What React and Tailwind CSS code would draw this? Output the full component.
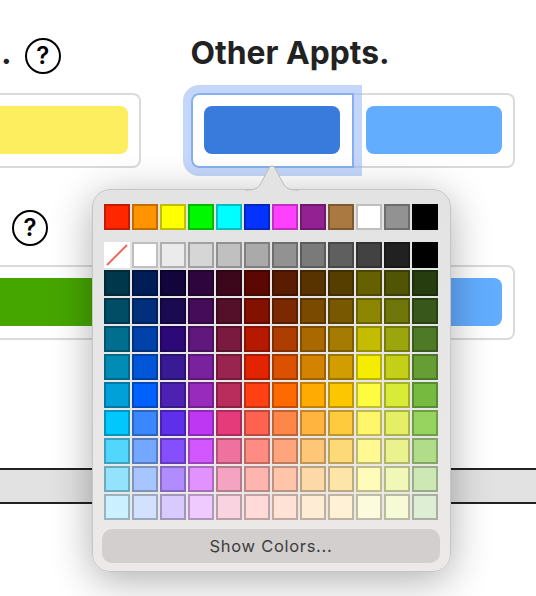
import React from "react";

const basics = ["#ff2600", "#ff9300", "#ffff00", "#00f900", "#00fdff", "#0433ff", "#ff40ff", "#942192", "#aa7942", "#ffffff", "#929292", "#000000"];

const grays = ["#ffffff", "#ebebeb", "#d6d6d6", "#c0c0c0", "#aaaaaa", "#929292", "#7a7a7a", "#5f5f5f", "#424242", "#212121", "#000000"];

const grid = [
  ["#00374a", "#011d57", "#11053b", "#2e063d", "#3c071b", "#5c0701", "#5a1c00", "#583300", "#563d00", "#666100", "#4f5504", "#263e0f"],
  ["#004d65", "#012f7b", "#1a0a52", "#450d59", "#551029", "#831100", "#7b2900", "#7a4a00", "#785800", "#8d8602", "#6f760a", "#38571a"],
  ["#006e8f", "#0042a9", "#2c0977", "#61187c", "#791a3e", "#b51a00", "#ad3e00", "#a96800", "#a67b01", "#c4bc00", "#9ba50e", "#4e7a27"],
  ["#008cb4", "#0056d6", "#371a94", "#7a219e", "#99244f", "#e22400", "#da5100", "#d38301", "#d19d01", "#f5ec00", "#c3d017", "#669d34"],
  ["#00a1d8", "#0061fe", "#4d22b2", "#982abc", "#b92d5d", "#ff4015", "#ff6a00", "#ffab01", "#fcc700", "#fefb41", "#d8ec37", "#76bb40"],
  ["#01c7fc", "#3a87fe", "#5e30eb", "#be38f3", "#e63b7a", "#fe6250", "#fe8648", "#feb43f", "#fecb3e", "#fff76b", "#e4ef65", "#96d35f"],
  ["#52d6fc", "#74a7ff", "#864ffd", "#d357fe", "#ee719e", "#ff8c82", "#fea57d", "#fec777", "#fed977", "#fff994", "#eaf28f", "#b1dd8b"],
  ["#93e3fc", "#a7c6ff", "#b18cfe", "#e292fe", "#f4a4c0", "#ffb5af", "#ffc5ab", "#fed9a8", "#fde4a8", "#fffbb9", "#f1f7b7", "#cde8b5"],
  ["#cbf0ff", "#d2e2fe", "#d8c9fe", "#efcafe", "#f9d3e0", "#ffdad8", "#ffe2d6", "#feecd4", "#fef1d5", "#fdfbdd", "#f6fad6", "#deeed4"],
];

const Swatch = ({ color }) => (
  <div className="w-[26px] h-[26px] border-2 border-black/25" style={{ backgroundColor: color }} />
);

const Help = () => (
  <span className="w-[36px] h-[36px] rounded-full border-2 border-black flex items-center justify-center text-[24px] leading-none font-semibold text-black">
    ?
  </span>
);

const Well = ({ className, color, children }) => (
  <div className={`h-[75px] border-2 bg-white flex items-center px-[11.5px] ${className}`}>
    <div className={`w-full h-[48px] rounded-lg ${color}`} />
    {children}
  </div>
);

const App = () => {
  return (
    <div className="relative w-[536px] h-[596px] overflow-hidden bg-white font-['Inter',sans-serif]">
      {/* Top row */}
      <div className="flex pt-[38px]">
        <div className="w-[190.5px] shrink-0">
          <div className="h-[54.5px] flex items-start gap-[13px]">
            <span className="text-[32px] leading-[29px] font-bold text-[#222222] pl-[1px]">.</span>
            <Help />
          </div>
          <Well className="w-[141px] rounded-r-lg border-l-0 pl-0 border-[#dadada]" color="bg-[#fcee5f] rounded-l-none" />
        </div>
        <div>
          <h2 className="h-[54.5px] text-[31.8px] leading-[29px] font-bold text-[#222222]">Other Appts.</h2>
          <div className="flex">
            <Well className="relative z-10 w-[163px] rounded-l-lg border-[#84b0ef]" color="bg-[#397bdc]">
              <div className="absolute -inset-[10px] rounded-l-[16px] border-[8px] border-[#9dbcf7]/60" />
            </Well>
            <Well className="w-[161.5px] rounded-r-lg border-l-0 pl-[12.5px] border-[#dadada]" color="bg-[#63adff]" />
          </div>
        </div>
      </div>

      {/* Second row */}
      <div className="pl-[12px] pt-[42.5px]">
        <Help />
      </div>
      <div className="flex pt-[18.5px] w-[515px]">
        <Well className="w-[353.5px] border-l-0 pl-0 border-[#dadada]" color="bg-[#46a600] rounded-l-none" />
        <Well className="flex-1 rounded-r-lg border-l-0 border-[#dadada]" color="bg-[#63adff]" />
      </div>

      {/* Band */}
      <div className="mt-[128.5px] h-[36px] border-y-2 border-[#222222] bg-[#e2e2e2]" />

      {/* Colour popover */}
      <div className="absolute z-20 left-[92px] top-[189px] w-[358.5px] h-[383px] rounded-[18px] border border-[#c6c4c4] bg-gradient-to-b from-[#e3e3e3] to-[#ede9e9] shadow-[0_8px_40px_rgba(0,0,0,0.32)]">
        <svg className="absolute left-[152px] top-[-26px]" width="54" height="27" viewBox="0 0 54 27">
          <path d="M0 26 C9 26 12 25 15 21 L24 4 Q27 0 30 4 L39 21 C42 25 45 26 54 26 L54 27 L0 27 Z" fill="#e3e3e3" />
          <path d="M0 26 C9 26 12 25 15 21 L24 4 Q27 0 30 4 L39 21 C42 25 45 26 54 26" fill="none" stroke="#bdbbbb" />
        </svg>
        <div className="flex flex-col items-start pt-[14px] pl-[11px]">
          <div className="flex gap-[2px]">
            {basics.map((c, i) => (
              <Swatch key={i} color={c} />
            ))}
          </div>
          <div className="flex gap-[2px] mt-[12px]">
            <svg width="26" height="26" viewBox="0 0 26 26" className="bg-white">
              <line x1="3" y1="23" x2="23" y2="3" stroke="#ee6a5f" strokeWidth="2" />
            </svg>
            {grays.map((c, i) => (
              <Swatch key={i} color={c} />
            ))}
          </div>
          <div className="flex flex-col gap-[2px] mt-[2px]">
            {grid.map((row, r) => (
              <div key={r} className="flex gap-[2px]">
                {row.map((c, i) => (
                  <Swatch key={i} color={c} />
                ))}
              </div>
            ))}
          </div>
          <button className="mt-[9px] -ml-[2px] w-[338px] h-[34px] pt-[1px] rounded-[10px] bg-[#d3cfcf] text-[16.5px] text-[#3d3d3d] tracking-[0.7px]">
            Show Colors...
          </button>
        </div>
      </div>
    </div>
  );
};

export default App;
